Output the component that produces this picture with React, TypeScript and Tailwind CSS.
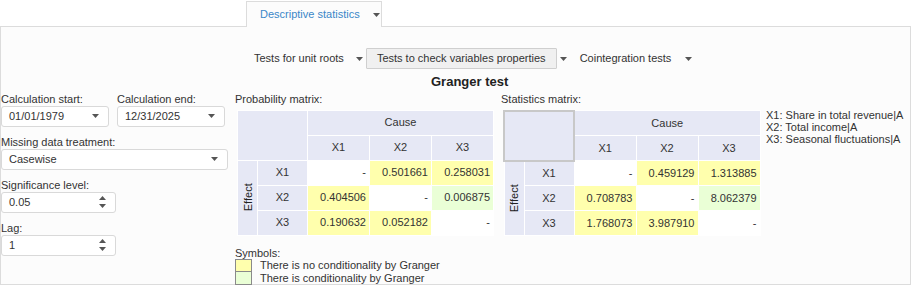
import React from 'react';

const font = { fontFamily: '"Liberation Sans", Arial, sans-serif' };

function Caret({ className = '' }: { className?: string }) {
  return (
    <svg className={className} width="7" height="4" viewBox="0 0 7 4">
      <path d="M0 0h7L3.5 4z" fill="#555" />
    </svg>
  );
}

function Spin() {
  return (
    <svg width="7" height="12" viewBox="0 0 7 12">
      <path d="M0 4L3.5 0 7 4z" fill="#555" />
      <path d="M0 8h7L3.5 12z" fill="#555" />
    </svg>
  );
}

function SelectBox({ value, width }: { value: string; width: string }) {
  return (
    <div className={`${width} h-[21px] flex items-center justify-between pl-[7px] pr-[9px] bg-white border border-[#d9d9d9] rounded-[3px] text-[#333]`}>
      <span>{value}</span>
      <Caret />
    </div>
  );
}

function NumBox({ value }: { value: string }) {
  return (
    <div className="w-[115px] h-[21px] flex items-center justify-between pl-[7px] pr-[9px] bg-white border border-[#d9d9d9] rounded-[3px] text-[#333]">
      <span>{value}</span>
      <Spin />
    </div>
  );
}

type Cell = { v: string; c: 'w' | 'y' | 'g' };

function Matrix({ rows, selected }: { rows: Cell[][]; selected?: boolean }) {
  const bg = { w: 'bg-white', y: 'bg-[#ffffad]', g: 'bg-[#eaffd6]' };
  const labels = ['X1', 'X2', 'X3'];
  return (
    <table className="border-collapse table-fixed w-[256px] text-[#333]">
      <colgroup>
        <col className="w-[20px]" />
        <col className="w-[50px]" />
        <col className="w-[62px]" />
        <col className="w-[62px]" />
        <col className="w-[62px]" />
      </colgroup>
      <tbody>
        <tr className="h-[25px]">
          <td
            colSpan={2}
            rowSpan={2}
            className={`bg-[#e6e8f5] ${selected ? 'border-2 border-[#c8c8c8]' : 'border border-white'}`}
          ></td>
          <td colSpan={3} className="bg-[#e6e8f5] border border-white text-center">
            Cause
          </td>
        </tr>
        <tr className="h-[25px]">
          {labels.map((l) => (
            <td key={l} className="bg-[#e6e8f5] border border-white text-center">
              {l}
            </td>
          ))}
        </tr>
        {rows.map((r, i) => (
          <tr key={i} className="h-[25px]">
            {i === 0 && (
              <td rowSpan={3} className="p-0 bg-[#e6e8f5] border border-white">
                <div className="flex items-center justify-center">
                  <span className="-rotate-90 block text-[#222]">Effect</span>
                </div>
              </td>
            )}
            <td className="bg-[#e6e8f5] border border-white text-center">{labels[i]}</td>
            {r.map((c, j) => (
              <td key={j} className={`${bg[c.c]} border border-white text-right pr-[3px]`}>
                {c.v}
              </td>
            ))}
          </tr>
        ))}
      </tbody>
    </table>
  );
}

export default function App() {
  const prob: Cell[][] = [
    [{ v: '-', c: 'w' }, { v: '0.501661', c: 'y' }, { v: '0.258031', c: 'y' }],
    [{ v: '0.404506', c: 'y' }, { v: '-', c: 'w' }, { v: '0.006875', c: 'g' }],
    [{ v: '0.190632', c: 'y' }, { v: '0.052182', c: 'y' }, { v: '-', c: 'w' }],
  ];
  const stat: Cell[][] = [
    [{ v: '-', c: 'w' }, { v: '0.459129', c: 'y' }, { v: '1.313885', c: 'y' }],
    [{ v: '0.708783', c: 'y' }, { v: '-', c: 'w' }, { v: '8.062379', c: 'g' }],
    [{ v: '1.768073', c: 'y' }, { v: '3.987910', c: 'y' }, { v: '-', c: 'w' }],
  ];

  return (
    <div className="w-[911px] h-[285px] bg-white text-[#333] text-[11px] overflow-hidden" style={font}>
      {/* tab strip */}
      <div className="h-[26px] flex items-end pl-[246px]">
        <div className="h-[26px] w-[136px] flex items-center border border-b-0 border-[#dcdcdc] bg-[#fcfcfc] pl-[13px] relative top-[1px] whitespace-nowrap">
          <span className="text-[#3a87c8]">Descriptive statistics</span>
          <Caret className="ml-[13px]" />
        </div>
      </div>

      <div className="h-[259px] border border-[#dcdcdc] w-[911px] bg-[#fcfcfc] flex flex-col">
        {/* toolbar */}
        <div className="flex items-center pl-[253px] pt-[21px] h-[42px] whitespace-nowrap">
          <span>Tests for unit roots</span>
          <Caret className="ml-[12px] mr-[3px]" />
          <div className="h-[21px] px-[10px] flex items-center bg-[#f0f0f0] border border-[#cfcfcf] rounded-[1px]">
            Tests to check variables properties
          </div>
          <Caret className="ml-[3px] mr-[13px]" />
          <span>Cointegration tests</span>
          <Caret className="ml-[14px]" />
        </div>

        <div className="pl-[430px] mt-[3px] h-[20px] flex items-center text-[13px] font-bold text-[#222]">Granger test</div>

        <div className="flex mt-[1px]">
          {/* left form */}
          <div className="w-[234px] flex flex-col">
            <div className="flex gap-[8px]">
              <div className="flex flex-col">
                <span className="leading-[13px]">Calculation start:</span>
                <SelectBox value="01/01/1979" width="w-[108px]" />
              </div>
              <div className="flex flex-col">
                <span className="leading-[13px]">Calculation end:</span>
                <SelectBox value="12/31/2025" width="w-[108px]" />
              </div>
            </div>
            <span className="leading-[13px] mt-[9px]">Missing data treatment:</span>
            <SelectBox value="Casewise" width="w-[227px]" />
            <span className="leading-[13px] mt-[9px]">Significance level:</span>
            <NumBox value="0.05" />
            <span className="leading-[13px] mt-[9px]">Lag:</span>
            <NumBox value="1" />
          </div>

          {/* probability matrix + symbols */}
          <div className="flex flex-col w-[266px]">
            <span className="leading-[13px] mb-[4px]">Probability matrix:</span>
            <div className="pl-[2px]">
              <Matrix rows={prob} />
            </div>
            <span className="leading-[12px] mt-[11px]">Symbols:</span>
            <div className="flex items-center leading-[13px]">
              <span className="w-[17px] h-[13px] bg-[#ffffad] border border-[#8a8a8a] mr-[8px]"></span>
              There is no conditionality by Granger
            </div>
            <div className="flex items-center leading-[13px]">
              <span className="w-[17px] h-[13px] bg-[#eaffd6] border border-[#8a8a8a] border-t-0 mr-[8px]"></span>
              There is conditionality by Granger
            </div>
          </div>

          {/* statistics matrix */}
          <div className="flex flex-col w-[265px]">
            <span className="leading-[13px] mb-[4px]">Statistics matrix:</span>
            <div className="pl-[2px]">
              <Matrix rows={stat} selected />
            </div>
          </div>

          {/* legend */}
          <div className="flex flex-col pt-[16px] leading-[12px] whitespace-nowrap">
            <span>X1: Share in total revenue|A</span>
            <span>X2: Total income|A</span>
            <span>X3: Seasonal fluctuations|A</span>
          </div>
        </div>
      </div>
    </div>
  );
}
